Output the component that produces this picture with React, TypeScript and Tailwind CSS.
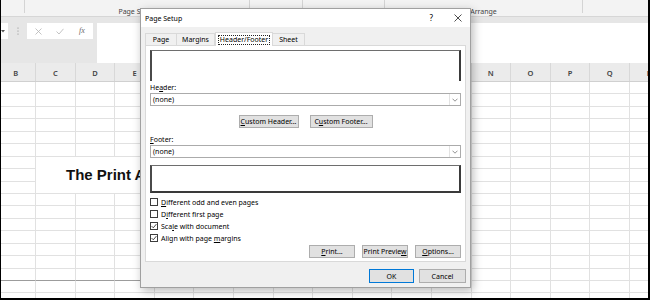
import React from "react";

const COLS = ["B", "C", "D", "E", "F", "G", "H", "I", "J", "K", "L", "M", "N", "O", "P", "Q", "R"];
const ROWS = Array.from({ length: 18 }, (_, i) => i);

function U({ children }: { children: React.ReactNode }) {
  return <span className="underline decoration-[0.7px] underline-offset-[1px]">{children}</span>;
}

function Check({ checked, children }: { checked?: boolean; children: React.ReactNode }) {
  return (
    <div className="flex items-center h-[12px] gap-[3px]">
      <div className="w-[8px] h-[8px] border border-[#3c3c3c] bg-white flex items-center justify-center">
        {checked && (
          <svg width="6" height="6" viewBox="0 0 6 6">
            <path d="M0.6 3.1 L2.3 4.8 L5.4 1.1" stroke="#333" strokeWidth="0.9" fill="none" />
          </svg>
        )}
      </div>
      <span className="leading-none">{children}</span>
    </div>
  );
}

function Btn({ cls, children }: { cls: string; children: React.ReactNode }) {
  return <div className={cls}>{children}</div>;
}

function Select() {
  return (
    <div className="h-[13px] bg-white border border-[#ababab] flex items-stretch">
      <span className="flex-1 pl-[2px] flex items-center leading-none">(none)</span>
      <div className="w-[11px] border-l border-[#e3e3e3] flex items-center justify-center">
        <svg width="6" height="4" viewBox="0 0 6 4">
          <path d="M0.5 0.7 L3 3.2 L5.5 0.7" stroke="#777" strokeWidth="0.8" fill="none" />
        </svg>
      </div>
    </div>
  );
}

export default function App() {
  const btn = "h-[13px] flex items-center justify-center bg-[#e1e1e1] border border-[#adadad] leading-none";
  return (
    <div
      className="relative w-[650px] h-[300px] overflow-hidden bg-white text-black"
      style={{ fontFamily: '"Noto Sans", "DejaVu Sans", sans-serif' }}
    >
      {/* Ribbon group labels */}
      <div className="h-[17px] bg-[#f3f3f3] border-b border-[#d6d6d6] flex text-[7px] text-[#444]">
        <div className="w-[25px] border-r border-[#d4d4d4] h-[13px]" />
        <div className="w-[225px] h-[16px] flex">
          <div className="flex-1 flex items-end justify-center pb-[1px] leading-none">Page Setup</div>
          <div className="w-px h-[13px] bg-[#d4d4d4]" />
        </div>
        <div className="w-[53px] border-r border-[#d4d4d4] h-[13px]" />
        <div className="w-[82px] border-r border-[#d4d4d4] h-[13px]" />
        <div className="w-[198px] h-[16px] flex">
          <div className="flex-1 flex items-end justify-center pb-[1px] leading-none">Arrange</div>
          <div className="w-px h-[13px] bg-[#d4d4d4]" />
        </div>
        <div className="flex-1" />
      </div>

      {/* Formula bar */}
      <div className="h-[46px] bg-[#e6e6e6] flex items-start pt-[6px]">
        <div className="w-[8px] h-[16px] bg-white flex items-center pl-[1px]">
          <svg width="4" height="3" viewBox="0 0 4 3">
            <path d="M0 0 L4 0 L2 2.5 Z" fill="#555" />
          </svg>
        </div>
        <div className="w-[19px] h-[16px] flex items-center justify-center">
          <svg width="2" height="8" viewBox="0 0 2 8">
            <circle cx="1" cy="1" r="0.6" fill="#888" />
            <circle cx="1" cy="4" r="0.6" fill="#888" />
            <circle cx="1" cy="7" r="0.6" fill="#888" />
          </svg>
        </div>
        <div className="w-[66px] h-[16px] bg-white flex items-center">
          <div className="w-[22px] flex justify-center">
            <svg width="7" height="7" viewBox="0 0 7 7">
              <path d="M0.5 0.5 L6.5 6.5 M6.5 0.5 L0.5 6.5" stroke="#b4b4b4" strokeWidth="0.8" />
            </svg>
          </div>
          <div className="w-[22px] flex justify-center">
            <svg width="8" height="7" viewBox="0 0 8 7">
              <path d="M0.5 3.5 L3 6 L7.5 0.8" stroke="#b4b4b4" strokeWidth="0.8" fill="none" />
            </svg>
          </div>
          <div
            className="w-[22px] flex justify-center italic text-[8px] text-[#6a6a6a] leading-none"
            style={{ fontFamily: '"Liberation Serif", serif' }}
          >
            fx
          </div>
        </div>
        <div className="ml-[4px] flex-1 h-[40px] bg-white" />
      </div>

      {/* Column headers */}
      <div className="h-[19px] bg-[#ebebeb] border-b border-[#d0d0d0] overflow-hidden">
        <div className="-ml-[3.6px] grid grid-cols-[repeat(17,39.6px)] h-full">
          {COLS.map((c) => (
            <div
              key={c}
              className="h-full flex items-center justify-center pt-[3px] text-[7.5px] text-[#444] font-semibold border-r border-[#d8d8d8] leading-none"
            >
              {c}
            </div>
          ))}
        </div>
      </div>

      {/* Sheet grid */}
      <div className="-ml-[3.6px] grid grid-cols-[repeat(17,39.6px)] auto-rows-[12.45px]">
        {ROWS.map((r) =>
          COLS.map((c, ci) => {
            if (r >= 6 && r <= 8 && ci >= 1 && ci <= 8) return null;
            const pb = r === 15 && ci < 10;
            return (
              <div
                key={`${r}-${c}`}
                style={{ gridRowStart: r + 1, gridColumnStart: ci + 1 }}
                className={
                  pb
                    ? "border-r border-b border-r-[#e1e1e1] border-b-[#9c9c9c]"
                    : "border-r border-b border-[#e1e1e1]"
                }
              />
            );
          })
        )}
        <div
          className="col-start-2 col-span-8 row-start-7 row-span-3 bg-white border-r border-b border-[#e1e1e1] flex items-center pl-[30px] pt-[1px] text-[15px] font-bold text-[#111] whitespace-nowrap"
          style={{ fontFamily: '"Liberation Sans", Arial, sans-serif' }}
        >
          The Print Area Setting
        </div>
      </div>

      {/* Page Setup dialog */}
      <div className="absolute left-[140px] top-[8px] w-[331px] h-[280px] border border-[#a0a0a0] bg-[#f0f0f0] shadow-[2px_3px_9px_rgba(0,0,0,0.28)] flex flex-col text-[7px] z-20">
        <div className="h-[18px] bg-white flex items-center pl-[4px] pr-[8px] leading-none">
          <span className="flex-1">Page Setup</span>
          <span className="text-[8px] mr-[21px]">?</span>
          <svg width="8" height="8" viewBox="0 0 8 8">
            <path d="M0.5 0.5 L7.5 7.5 M7.5 0.5 L0.5 7.5" stroke="#222" strokeWidth="0.8" />
          </svg>
        </div>

        <div className="flex-1 flex flex-col px-[4px]">
          {/* Tabs */}
          <div className="mt-[5px] h-[13px] flex items-end relative z-10">
            <div className="w-[32px] h-[12px] border border-b-0 border-[#d9d9d9] flex items-center justify-center leading-none">
              Page
            </div>
            <div className="w-[38px] h-[12px] border border-b-0 border-l-0 border-[#d9d9d9] flex items-center justify-center leading-none">
              Margins
            </div>
            <div className="w-[58px] h-[14px] -mb-px bg-white border border-b-0 border-[#d9d9d9] flex items-center justify-center">
              <span className="border border-dotted border-[#222] px-[1px] leading-[8px]">Header/Footer</span>
            </div>
            <div className="w-[32px] h-[12px] border border-b-0 border-l-0 border-[#d9d9d9] flex items-center justify-center leading-none">
              Sheet
            </div>
          </div>

          {/* Panel */}
          <div className="h-[217px] bg-white border border-[#d9d9d9] px-[4px] pt-[4px] flex flex-col">
            <div className="h-[31px] bg-white border-t border-t-[#6e6e6e] border-l-2 border-l-[#4a4a4a] border-r-2 border-r-[#3a3a3a]" />
            <div className="h-[12px] flex items-center leading-none">
              <span>
                He<U>a</U>der:
              </span>
            </div>
            <Select />
            <div className="h-[22px] mt-[9px] flex items-start justify-center gap-[11px]">
              <Btn cls={`${btn} w-[60px] h-[12px]`}>
                <span>
                  <U>C</U>ustom Header...
                </span>
              </Btn>
              <Btn cls={`${btn} w-[63px] h-[12px]`}>
                <span>
                  C<U>u</U>stom Footer...
                </span>
              </Btn>
            </div>
            <div className="h-[12px] -mt-[4px] flex items-center leading-none">
              <span>
                <U>F</U>ooter:
              </span>
            </div>
            <Select />
            <div className="mt-[7px] h-[28px] bg-white border-t border-t-[#6e6e6e] border-l-2 border-l-[#4a4a4a] border-r-2 border-r-[#3a3a3a] border-b-2 border-b-[#3a3a3a]" />
            <div className="mt-[3px] flex flex-col">
              <Check>
                <U>D</U>ifferent odd and even pages
              </Check>
              <Check>
                D<U>i</U>fferent first page
              </Check>
              <Check checked>
                Sca<U>l</U>e with document
              </Check>
              <Check checked>
                Align with page <U>m</U>argins
              </Check>
            </div>
            <div className="mt-[1px] flex justify-end gap-[7px]">
              <Btn cls={`${btn} w-[46px]`}>
                <span>
                  <U>P</U>rint...
                </span>
              </Btn>
              <Btn cls={`${btn} w-[46px]`}>
                <span>
                  Print Previe<U>w</U>
                </span>
              </Btn>
              <Btn cls={`${btn} w-[46px]`}>
                <span>
                  <U>O</U>ptions...
                </span>
              </Btn>
            </div>
          </div>

          <div className="mt-[7px] flex justify-end gap-[5px]">
            <div className="w-[45px] h-[14px] flex items-center justify-center bg-[#e1e1e1] border border-[#0078d7] leading-none">
              OK
            </div>
            <div className="w-[47px] h-[14px] flex items-center justify-center bg-[#e1e1e1] border border-[#adadad] leading-none">
              Cancel
            </div>
          </div>
        </div>
      </div>

      {/* outer frame */}
      <div className="absolute inset-0 border-l border-r-2 border-b-2 border-black pointer-events-none z-50" />
    </div>
  );
}
